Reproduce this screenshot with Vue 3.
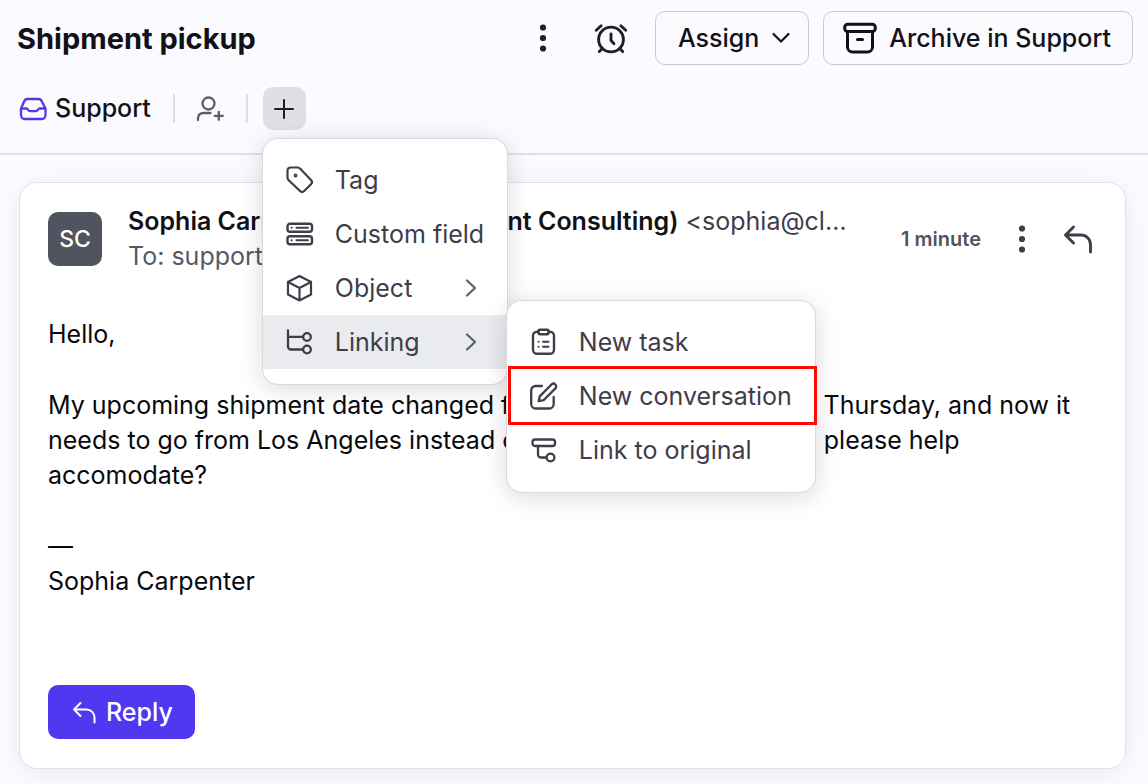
<script setup>
import { ref } from 'vue'

const menuOpen = ref(true)

const bodyLines = [
  'Hello,',
  '',
  'My upcoming shipment date changed from Monday next week to Thursday, and now it needs to go from Los Angeles instead of Oklahoma City. Can you please help accomodate?',
  '',
  '—',
  'Sophia Carpenter',
]
</script>

<template>
  <div class="page">
    <header class="header">
      <div class="title-row">
        <h1>Shipment pickup</h1>
        <div class="actions">
          <button class="icon-btn" aria-label="More actions">
            <svg width="32" height="32" viewBox="0 0 32 32" fill="#211d2b">
              <circle cx="16" cy="5.5" r="3.1" /><circle cx="16" cy="16" r="3.1" /><circle cx="16" cy="26.5" r="3.1" />
            </svg>
          </button>
          <button class="icon-btn" aria-label="Snooze">
            <svg class="stroke" width="36" height="36" viewBox="0 0 36 36" stroke="#211d2b" stroke-width="2.9">
              <circle cx="18" cy="19.5" r="12.4" />
              <path d="M18 14v6.5l3 3.2M3.3 10.2l4.8-4.5M32.7 10.2l-4.800-4.5M9.3 28.5l-3 3M26.7 28.5l3 3" />
            </svg>
          </button>
          <button class="outline-btn assign">
            Assign
            <svg class="stroke" width="20" height="20" viewBox="0 0 20 20" stroke="#111116" stroke-width="2.2">
              <path d="M2.5 6l7.5 7.5L17.5 6" />
            </svg>
          </button>
          <button class="outline-btn archive">
            <svg class="stroke" width="34" height="32" viewBox="0 0 34 32" stroke="#111116" stroke-width="3">
              <rect x="1.7" y="2.2" width="30.6" height="7.3" rx="3" />
              <path d="M4.5 9.5V25a5 5 0 0 0 5 5h15a5 5 0 0 0 5-5V9.5M14.5 17.5h5" />
            </svg>
            Archive in Support
          </button>
        </div>
      </div>

      <div class="tool-row">
        <a class="inbox" href="#">
          <svg class="stroke" width="28" height="24" viewBox="0 0 28 24" stroke="#4f38ef" stroke-width="2.3">
            <path d="M2 11.5L5.2 4.200a3.500 3.500 0 0 1 3.200-2.200h11.200A3.500 3.500 0 0 1 22.800 4.200l3.700 7.300V18a4 4 0 0 1-4 4H6a4 4 0 0 1-4-4zM2 11.500H7.500c1.500 0 1.500 2.700 3.500 2.700h6c2 0 2-2.700 3.500-2.700h6" />
          </svg>
          Support
        </a>
        <span class="rule"></span>
        <button class="icon-btn person" aria-label="Add participant">
          <svg class="stroke" width="28" height="26" viewBox="0 0 28 26" stroke="#5b5d68" stroke-width="2.3">
            <circle cx="12.500" cy="7.500" r="6" />
            <path d="M2 24v-1.500c0-4 2.500-5.500 6-5.500h6.500M22.800 15.800v8M18.800 19.800h8" />
          </svg>
        </button>
        <span class="rule"></span>
        <div class="add">
          <button class="add-btn" aria-label="Add" :aria-expanded="menuOpen" @click="menuOpen = !menuOpen">
            <svg class="stroke" width="20" height="20" viewBox="0 0 20 20" stroke="#211d2b" stroke-width="2">
              <path d="M10 1v18M1 10h18" />
            </svg>
          </button>

          <ul v-if="menuOpen" class="menu">
            <li>
              <button class="item">
                <svg class="stroke" width="28" height="28" viewBox="0 0 28 28" stroke="#3f3d49" stroke-width="2.2">
                  <path d="M1.500 4.500a3 3 0 0 1 3-3h7a4 4 0 0 1 2.800 1.200L25 14a3 3 0 0 1 0 4.200l-6.800 6.800a3 3 0 0 1-4.200 0L2.700 14.300a4 4 0 0 1-1.200-2.800z" />
                  <circle cx="9.500" cy="9.500" r=".8" />
                </svg>
                Tag
              </button>
            </li>
            <li>
              <button class="item">
                <svg class="stroke" width="28" height="28" viewBox="0 0 28 28" stroke="#3f3d49" stroke-width="2.4">
                  <rect x="1.500" y="3.800" width="24.500" height="8" rx="2.500" />
                  <rect x="1.500" y="16.300" width="24.500" height="8" rx="2.500" />
                  <path d="M5.500 7.800h.2M10.500 7.800h11.500M5.500 20.300h.2M10.500 20.300h11.500" stroke-width="2" />
                </svg>
                Custom field
              </button>
            </li>
            <li>
              <button class="item">
                <svg class="stroke" width="28" height="28" viewBox="0 0 28 28" stroke="#3f3d49" stroke-width="2.2">
                  <path d="M13.500 2l11.500 6v12.500L13.500 26.500 2 20.500V8zM2 8l11.500 6L25 8M13.500 14v12.500" />
                </svg>
                Object
                <svg class="chevron stroke" width="12" height="18" viewBox="0 0 12 18" stroke="#5b5f6e" stroke-width="2.2">
                  <path d="M2 1.500L10 9l-8 7.500" />
                </svg>
              </button>
            </li>
            <li class="has-sub">
              <button class="item active" aria-expanded="true">
                <svg class="stroke" width="28" height="28" viewBox="0 0 28 28" stroke="#3f3d49" stroke-width="2.3">
                  <path d="M2 2.500v16a3 3 0 0 0 3 3h12M2 8.800h15" />
                  <circle cx="21" cy="9" r="3.800" /><circle cx="21" cy="21.500" r="3.800" />
                </svg>
                Linking
                <svg class="chevron stroke" width="12" height="18" viewBox="0 0 12 18" stroke="#5b5f6e" stroke-width="2.2">
                  <path d="M2 1.500L10 9l-8 7.500" />
                </svg>
              </button>

              <ul class="menu submenu">
                <li>
                  <button class="item">
                    <svg class="stroke" width="28" height="28" viewBox="0 0 28 28" stroke="#3f3d49" stroke-width="2.4">
                      <path d="M8.500 3.800H7a4 4 0 0 0-4 4v14a4 4 0 0 0 4 4h13a4 4 0 0 0 4-4v-14a4 4 0 0 0-4-4H18.500" />
                      <rect x="8.500" y="1.800" width="10" height="4.500" rx="1.500" />
                      <path d="M8.500 13.800h.1M13 13.800h5.500M8.500 18.800h.1M13 18.800h5.500" stroke-width="2" />
                    </svg>
                    New task
                  </button>
                </li>
                <li class="marked">
                  <button class="item">
                    <svg class="stroke" width="28" height="28" viewBox="0 0 28 28" stroke="#3f3d49" stroke-width="2.3">
                      <path d="M12 4H5.500A4.500 4.500 0 0 0 1.200 8.500v13.500A4.500 4.500 0 0 0 5.700 26.500h13.500a4.500 4.500 0 0 0 4.500-4.500V15M8.700 19.200l1-4.800L21.500 2.500a2.700 2.700 0 0 1 3.900 3.900L13.600 18.200z" />
                    </svg>
                    New conversation
                  </button>
                </li>
                <li>
                  <button class="item">
                    <svg class="stroke" width="28" height="28" viewBox="0 0 28 28" stroke="#3f3d49" stroke-width="2.3">
                      <rect x="2.500" y="3.500" width="22.500" height="6.500" rx="2.500" />
                      <path d="M8 10v8.500a3 3 0 0 0 3 3h5.500" />
                      <circle cx="20.500" cy="21.500" r="3.900" />
                    </svg>
                    Link to original
                  </button>
                </li>
              </ul>
            </li>
          </ul>
        </div>
      </div>
    </header>

    <main class="content">
      <article class="card">
        <div class="card-head">
          <span class="avatar">SC</span>
          <div class="who">
            <p class="from"><strong>Sophia Carpenter (Clear Payment Consulting)</strong> &lt;sophia@clearpayment.com&gt;</p>
            <p class="to">To: support</p>
          </div>
          <time>1 minute</time>
          <button class="icon-btn more" aria-label="Message actions">
            <svg width="32" height="32" viewBox="0 0 32 32" fill="#3f3d49">
              <circle cx="16" cy="5.500" r="3.100" /><circle cx="16" cy="16" r="3.100" /><circle cx="16" cy="26.500" r="3.100" />
            </svg>
          </button>
          <button class="icon-btn back" aria-label="Reply to message">
            <svg class="stroke" width="30" height="30" viewBox="0 0 30 30" stroke="#3f3d49" stroke-width="2.9">
              <path d="M10.500 3L2.500 11l8 8M2.500 11H18a9.500 9.500 0 0 1 9.500 9.500V28" />
            </svg>
          </button>
        </div>

        <div class="body">
          <p v-for="(line, i) in bodyLines" :key="i">{{ line }}</p>
        </div>

        <button class="reply">
          <svg class="stroke" width="24" height="24" viewBox="0 0 24 24" stroke="#fff" stroke-width="2">
            <path d="M8.500 3L2 9.500 8.500 16M2 9.500h12.500a8 8 0 0 1 8 8V22.500" />
          </svg>
          Reply
        </button>
      </article>
    </main>
  </div>
</template>

<style>
body {
  margin: 0;
  background: #fbfaff;
}
</style>

<style scoped>
.page {
  min-height: 100vh;
  box-sizing: border-box;
  font-family: Inter, "Liberation Sans", sans-serif;
  font-size: 25px;
  line-height: 35px;
  color: #111116;
}

button {
  font: inherit;
  color: inherit;
  margin: 0;
  padding: 0;
  border: 0;
  background: none;
  cursor: pointer;
}

h1, p, ul {
  margin: 0;
  padding: 0;
}

ul {
  list-style: none;
}

svg {
  display: block;
  flex: none;
}

.stroke {
  fill: none;
  stroke-linecap: round;
  stroke-linejoin: round;
}

.header {
  padding: 11px 15px 23px 17px;
  border-bottom: 2px solid #e1dfe6;
}

.title-row {
  display: flex;
  align-items: center;
  justify-content: space-between;
}

h1 {
  font-size: 29px;
  font-weight: 700;
}

.actions {
  display: flex;
  align-items: center;
}

.actions .icon-btn {
  margin-right: 34px;
}

.actions .icon-btn + .icon-btn {
  margin-right: 26px;
}

.outline-btn {
  display: flex;
  align-items: center;
  box-sizing: border-box;
  height: 54px;
  border: 1px solid #c9c8cf;
  border-radius: 10px;
  font-weight: 500;
  white-space: nowrap;
}

.assign {
  gap: 12px;
  padding: 0 17px 0 22px;
  margin-right: 14px;
}

.archive {
  gap: 12px;
  padding: 0 21px 0 19px;
}

.tool-row {
  display: flex;
  align-items: center;
  margin-top: 22px;
}

.inbox {
  display: flex;
  align-items: center;
  gap: 8px;
  padding-left: 2px;
  color: inherit;
  font-weight: 500;
  text-decoration: none;
}

.rule {
  width: 2px;
  height: 29px;
  margin-left: 22px;
  background: #dfdde5;
}

.person {
  margin-left: 21px;
}

.add {
  position: relative;
  margin-left: 15px;
}

.add-btn {
  display: grid;
  place-items: center;
  width: 43px;
  height: 43px;
  border-radius: 10px;
  background: #e1dfe5;
}

.menu {
  position: absolute;
  z-index: 2;
  top: 52px;
  left: 0;
  width: 244px;
  padding: 14px 0 15px;
  border-radius: 15px;
  background: #fff;
  box-shadow: 0 0 0 1px #d9d8dd, 0 4px 24px rgba(20, 18, 30, 0.17);
}

.submenu {
  top: -14px;
  left: 244px;
  width: 308px;
}

.has-sub,
.marked {
  position: relative;
}

.item {
  display: flex;
  align-items: center;
  gap: 21px;
  width: 100%;
  height: 54px;
  padding: 0 30px 0 23px;
  color: #3f3d49;
  text-align: left;
  white-space: nowrap;
}

.item.active {
  background: #eaebef;
}

.chevron {
  margin-left: auto;
}

.marked::after {
  content: "";
  position: absolute;
  inset: -3px -2px -2px 1px;
  border: 3px solid #fb0a07;
  pointer-events: none;
}

.content {
  padding: 27px 22px 15px 19px;
}

.card {
  padding: 29px 28px;
  border: 1px solid #e3e1e8;
  border-radius: 18px;
  background: #fff;
  box-shadow: 0 4px 24px rgba(40, 30, 80, 0.07);
}

.card-head {
  display: flex;
  align-items: center;
}

.avatar {
  display: grid;
  place-items: center;
  flex: none;
  width: 54px;
  height: 54px;
  border-radius: 10px;
  background: #50545e;
  color: #fff;
  font-size: 23px;
  font-weight: 500;
}

.who {
  flex: 1;
  min-width: 0;
  margin: -8px 48px -8px 26px;
}

.from {
  overflow: hidden;
  color: #3f3d49;
  text-overflow: ellipsis;
  white-space: nowrap;
}

.from strong {
  color: #111116;
  font-weight: 600;
}

.to {
  color: #555965;
}

time {
  color: #50545e;
  font-size: 20px;
  font-weight: 600;
  white-space: nowrap;
}

.more {
  margin-left: 25px;
}

.back {
  margin: 0 4px 0 25px;
}

.body {
  margin-top: 51px;
  color: #09090c;
}

.body p:empty {
  height: 36px;
}

.reply {
  display: flex;
  align-items: center;
  gap: 10px;
  height: 54px;
  margin-top: 86px;
  padding: 0 22px 0 24px;
  border-radius: 10px;
  background: #4f38ef;
  color: #fff;
  font-weight: 500;
}
</style>
